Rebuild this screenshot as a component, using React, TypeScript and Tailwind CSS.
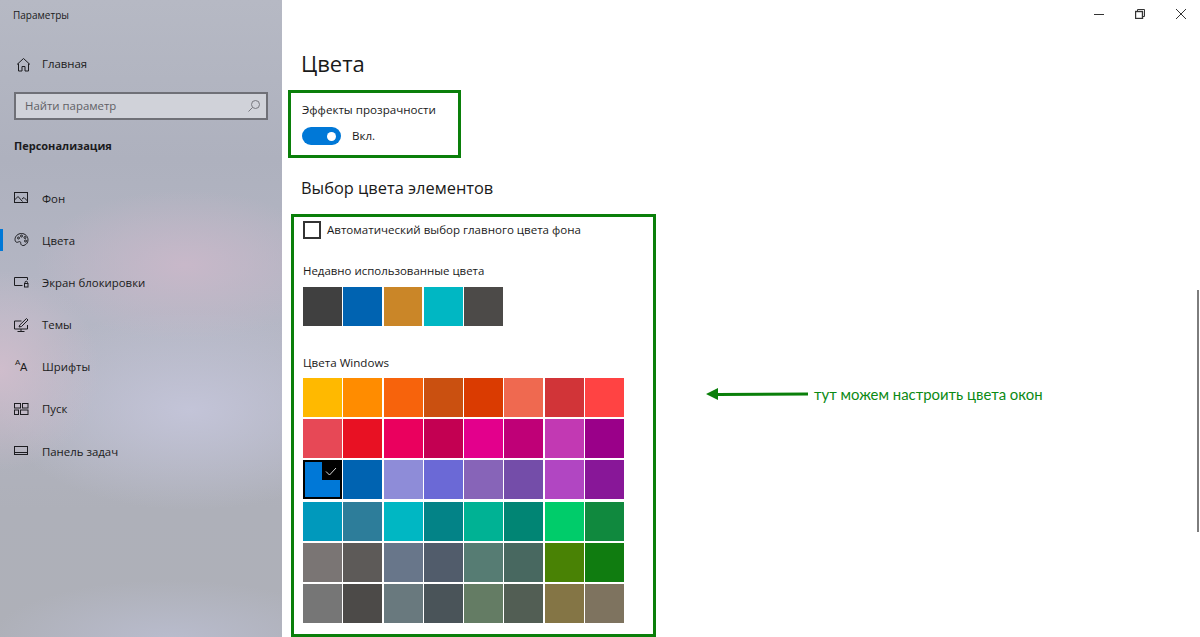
const recent = ["#404040", "#0063b1", "#ca8628", "#00b7c3", "#4c4a48"];

const windowsColors = [
  ["#ffb900", "#ff8c00", "#f7630c", "#ca5010", "#da3b01", "#ef6950", "#d13438", "#ff4343"],
  ["#e74856", "#e81123", "#ea005e", "#c30052", "#e3008c", "#bf0077", "#c239b3", "#9a0089"],
  ["#0078d7", "#0063b1", "#8e8cd8", "#6b69d6", "#8764b8", "#744da9", "#b146c2", "#881798"],
  ["#0099bc", "#2d7d9a", "#00b7c3", "#038387", "#00b294", "#018574", "#00cc6a", "#10893e"],
  ["#7a7574", "#5d5a58", "#68768a", "#515c6b", "#567c73", "#486860", "#498205", "#107c10"],
  ["#767676", "#4c4a48", "#69797e", "#4a5459", "#647c64", "#525e54", "#847545", "#7e735f"],
];

function Icon({ children }: { children: React.ReactNode }) {
  return (
    <svg width="16" height="16" viewBox="0 0 16 16" fill="none" stroke="#1c1c20" strokeWidth="1" className="shrink-0">
      {children}
    </svg>
  );
}

const navItems: { label: string; active?: boolean; icon: React.ReactNode }[] = [
  {
    label: "Фон",
    icon: (
      <Icon>
        <rect x="0.500" y="2.500" width="13" height="10" />
        <path d="M0.500 10l3.500-3.500L8.500 11.500M8 9l2-1.500 3.500 3.500" />
      </Icon>
    ),
  },
  {
    label: "Цвета",
    active: true,
    icon: (
      <Icon>
        <path d="M7.500 1.500c-3.600 0-6.500 2.700-6.500 6 0 2 1.200 3 2.300 2.800 1.200-.2 1.800-1 2.900-.5 1 .5.2 1.500.8 2.600.6 1 1.800 1.400 3 1 2.500-.8 4-3 4-5.500 0-3.600-2.900-6.400-6.500-6.400z" />
        <circle cx="4.500" cy="6" r="1" />
        <circle cx="7.500" cy="4" r="1" />
        <circle cx="11" cy="5.500" r="1" />
        <circle cx="11.500" cy="9" r="1" />
      </Icon>
    ),
  },
  {
    label: "Экран блокировки",
    icon: (
      <Icon>
        <path d="M8.500 11.500H0.500V3.500h13V6" />
        <rect x="10.500" y="9.500" width="3.500" height="3.500" />
        <path d="M11 9.500V8.500a1.200 1.200 0 0 1 2.500 0v1" />
      </Icon>
    ),
  },
  {
    label: "Темы",
    icon: (
      <Icon>
        <path d="M7.500 4H0.500v8h13V8M7 12v2M3.500 14.500h7" />
        <path d="M5 10l.8-2L12.500 1.500l1.500 1.500L7.500 9.500z" />
      </Icon>
    ),
  },
  {
    label: "Шрифты",
    icon: (
      <span className="w-4 h-4 relative text-[#1c1c20] leading-none font-['Liberation_Sans',sans-serif]">
        <span className="absolute left-[1px] top-0 text-[8px]">A</span>
        <span className="absolute left-[6px] top-[3px] text-[11px]">A</span>
      </span>
    ),
  },
  {
    label: "Пуск",
    icon: (
      <Icon>
        <rect x="0.500" y="2.500" width="6" height="4.500" />
        <rect x="8.500" y="2.500" width="5.500" height="4.500" />
        <rect x="0.500" y="9" width="4" height="4.500" />
        <rect x="6.500" y="9" width="7.500" height="4.500" />
      </Icon>
    ),
  },
  {
    label: "Панель задач",
    icon: (
      <Icon>
        <rect x="0.500" y="3.500" width="13" height="8" />
        <path d="M0.500 9.500h13" />
      </Icon>
    ),
  },
];

function Sidebar() {
  return (
    <aside className="w-[282px] shrink-0 h-full flex flex-col text-[#1b1b20] bg-[radial-gradient(ellipse_150px_75px_at_185px_265px,#c8b8c9_0%,transparent_100%),radial-gradient(ellipse_100px_100px_at_0px_370px,#cfbdcc_0%,transparent_100%),radial-gradient(ellipse_190px_100px_at_190px_410px,#c3c4d8_0%,transparent_100%),radial-gradient(ellipse_180px_60px_at_170px_640px,#b9bccd_0%,transparent_100%),linear-gradient(180deg,#b6b9c4_0%,#aeb1be_25%,#b5b7c5_50%,#aeb0b9_80%,#aeb0b8_100%)]">
      <div className="h-[30px] pl-[13px] flex items-center text-[10px]">Параметры</div>
      <div className="h-[42px] mt-[13px] pl-[16px] flex items-center gap-[11px] text-[11.400px]">
        <svg width="15" height="15" viewBox="0 0 15 15" fill="none" stroke="#1c1c20" strokeWidth="1">
          <path d="M1 7.500 7.500 1.500l6.500 6M2.500 6.500V14H6V9.500h3V14h3.500V6.500" />
        </svg>
        Главная
      </div>
      <div className="mx-[14px] h-[28px] mt-[7px] border-2 border-[#6f7077] bg-[#d0d2d9] flex items-center justify-between pl-[9px] pr-[5px] text-[11.400px] text-[#5f6065]">
        Найти параметр
        <svg width="14" height="14" viewBox="0 0 14 14" fill="none" stroke="#77787e" strokeWidth="1">
          <circle cx="8.500" cy="5.500" r="4" />
          <path d="M5.500 8.500 1.500 12.500" />
        </svg>
      </div>
      <div className="h-[20px] mt-[16px] pl-[14px] flex items-center text-[11px] font-bold">Персонализация</div>
      <nav className="mt-[21px] flex flex-col">
        {navItems.map((item) => (
          <div key={item.label} className="relative h-[42.200px] pl-[14px] flex items-center gap-[12px] text-[11.400px]">
            {item.active && <span className="absolute left-0 top-[10px] h-[22px] w-[3px] bg-[#0078d7]" />}
            {item.icon}
            {item.label}
          </div>
        ))}
      </nav>
    </aside>
  );
}

function WindowControls() {
  return (
    <div className="h-[28px] flex justify-end items-center pr-[14px] gap-[31px]">
      <svg width="10" height="10" viewBox="0 0 10 10" stroke="#333" strokeWidth="1" fill="none">
        <path d="M0 5.500h10" />
      </svg>
      <svg width="10" height="10" viewBox="0 0 10 10" stroke="#333" strokeWidth="1" fill="none">
        <rect x="0.500" y="2.500" width="7" height="7" strokeWidth="1.400" />
        <path d="M2.500 2.500V.5h7v7H7.500" />
      </svg>
      <svg width="10" height="10" viewBox="0 0 10 10" stroke="#333" strokeWidth="1" fill="none">
        <path d="M0 0l10 10M10 0 0 10" />
      </svg>
    </div>
  );
}

function Swatch({ color, selected }: { color: string; selected?: boolean }) {
  if (selected) {
    return (
      <div className="relative h-[39px] border-2 border-black" style={{ backgroundColor: color }}>
        <span className="absolute top-0 right-0 w-[18px] h-[18px] bg-black flex items-center justify-center">
          <svg width="12" height="9" viewBox="0 0 12 9" fill="none" stroke="#d8d8d8" strokeWidth="1">
            <path d="M1 4.500l3.500 3.500L11 1" />
          </svg>
        </span>
      </div>
    );
  }
  return <div className="h-[39px]" style={{ backgroundColor: color }} />;
}

export default function App() {
  return (
    <div className="relative w-[1200px] h-[637px] overflow-hidden flex bg-white font-['Open_Sans','Noto_Sans',sans-serif]">
      <Sidebar />
      <main className="flex-1 flex flex-col text-[#1a1a1a]">
        <WindowControls />
        <h1 className="ml-[19px] mt-[19px] text-[22px] leading-[32px]">Цвета</h1>
        <section className="ml-[6px] mt-[11px] w-[173px] h-[68px] border-[3px] border-[#0a7f0a] pl-[11px] pt-[8px]">
          <div className="text-[11.600px] leading-[18px]">Эффекты прозрачности</div>
          <div className="mt-[8px] flex items-center gap-[11px] text-[11.600px]">
            <span className="w-[39px] h-[18px] rounded-full bg-[#0078d7] flex items-center justify-end pr-[5px]">
              <span className="w-[9px] h-[9px] rounded-full bg-white" />
            </span>
            Вкл.
          </div>
        </section>
        <h2 className="ml-[19px] mt-[18px] text-[16.400px] leading-[24px]">Выбор цвета элементов</h2>
        <div className="flex items-start mt-[14px]">
          <section className="ml-[9px] w-[365px] h-[423px] border-[3px] border-[#0a7f0a] pl-[9px] shrink-0">
            <label className="flex items-center gap-[6px] mt-[4px] text-[11.550px]">
              <span className="w-[18px] h-[18px] border-2 border-[#333]" />
              Автоматический выбор главного цвета фона
            </label>
            <div className="mt-[23px] text-[11.450px] leading-[18px]">Недавно использованные цвета</div>
            <div className="mt-[7px] flex gap-[1.400px]">
              {recent.map((c) => (
                <div key={c} className="w-[38.900px] h-[39px]" style={{ backgroundColor: c }} />
              ))}
            </div>
            <div className="mt-[28px] text-[11.600px] leading-[18px]">Цвета Windows</div>
            <div className="mt-[6px] w-[321px] grid grid-cols-8 gap-x-[1.400px] gap-y-[2.200px]">
              {windowsColors.flat().map((c, i) => (
                <Swatch key={i} color={c} selected={i === 16} />
              ))}
            </div>
          </section>
          <div className="ml-[50px] mt-[169px] flex items-center gap-[5px] text-[#0b8a14] text-[14.900px] font-['Lato',sans-serif]">
            <svg width="103" height="14" viewBox="0 0 103 14">
              <path d="M0 7 12 1v5L102 5.500v3L12 9v4z" fill="#0a7f0a" />
            </svg>
            тут можем настроить цвета окон
          </div>
        </div>
      </main>
      <span className="absolute right-[1px] top-[290px] w-[2px] h-[242px] bg-[#7d7d7d]" />
    </div>
  );
}
